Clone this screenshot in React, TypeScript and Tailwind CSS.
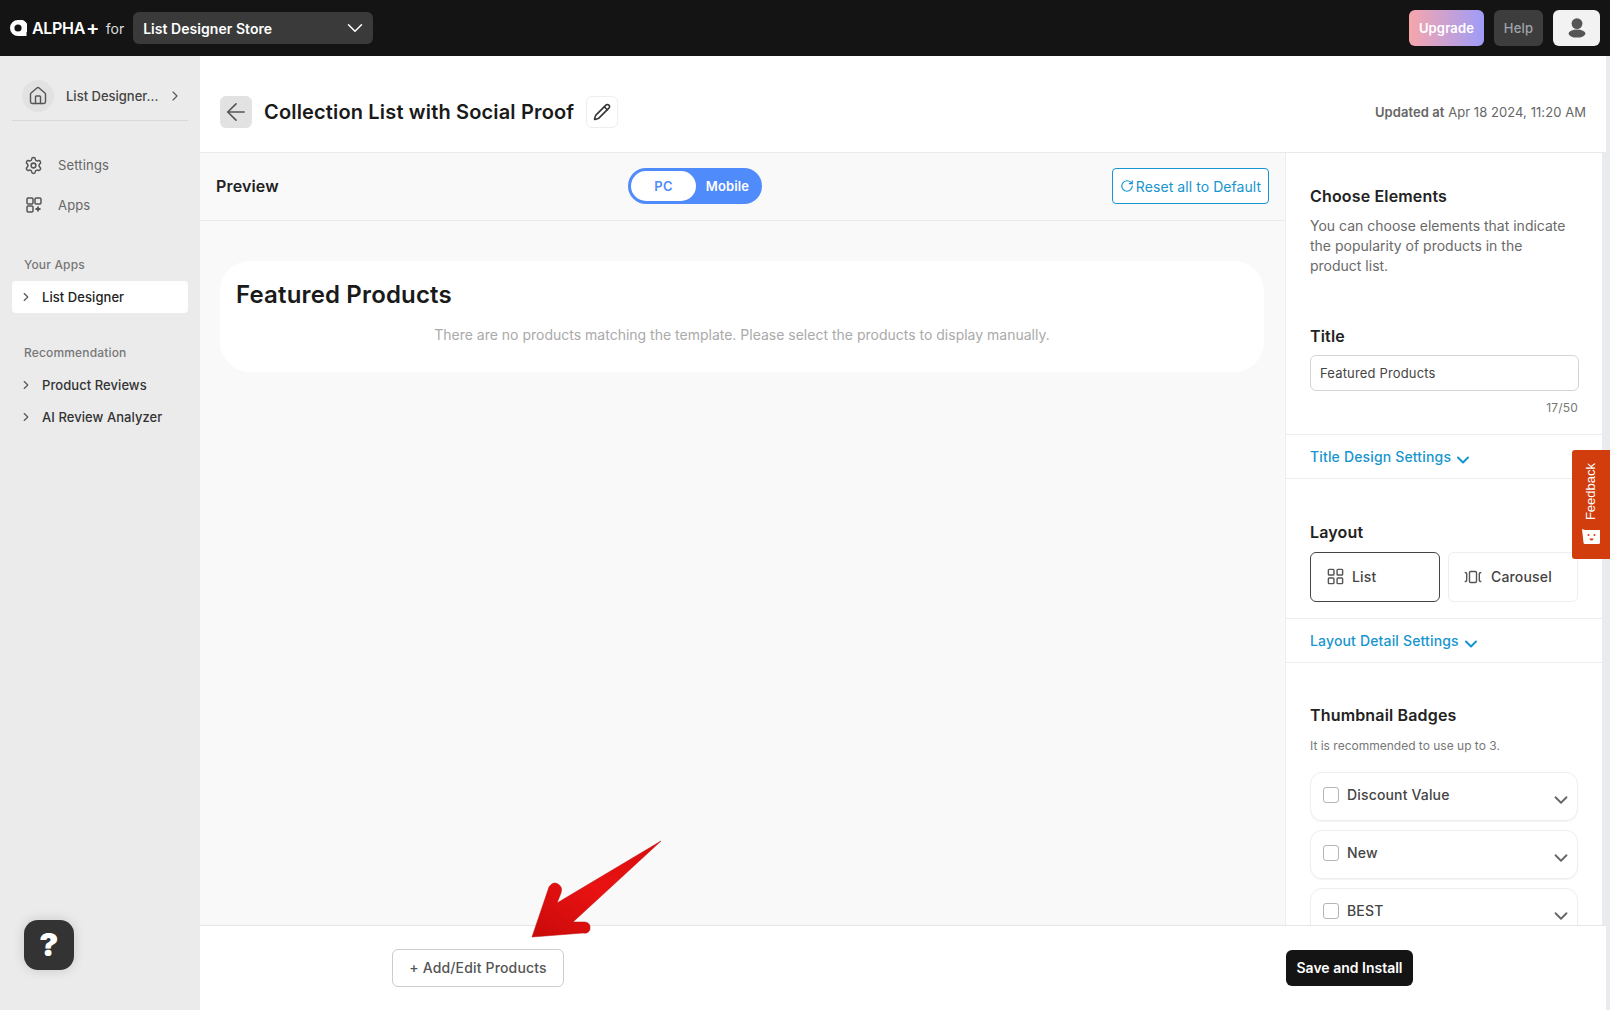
import { ArrowLeft, ChevronDown, ChevronRight, House, LayoutGrid, Pencil, RotateCw, Settings } from "lucide-react";

function AppsPlus() {
  return (
    <svg width="16" height="16" viewBox="0 0 16 16" fill="none" stroke="#555" strokeWidth="1.5">
      <rect x="1" y="1" width="6" height="6" rx="1.2" />
      <rect x="9" y="1" width="6" height="6" rx="1.2" />
      <rect x="1" y="9" width="6" height="6" rx="1.2" />
      <path d="M12 9.5v5M9.5 12h5" strokeWidth="1.8" />
    </svg>
  );
}

function CarouselIcon() {
  return (
    <svg width="18" height="14" viewBox="0 0 18 14" fill="none" stroke="#555" strokeWidth="1.4">
      <rect x="5.5" y="1.5" width="7" height="11" rx="1.2" />
      <path d="M0.7 2.5c1.4 0 2 .6 2 1.6v5.8c0 1-.6 1.6-2 1.6M17.3 2.5c-1.4 0-2 .6-2 1.6v5.8c0 1 .6 1.6 2 1.6" />
    </svg>
  );
}

function Logo() {
  return (
    <svg width="17" height="16" viewBox="0 0 17 16">
      <path d="M8 0a8 8 0 1 0 0 16h8.5v-3.5A8 8 0 0 0 8 0z" fill="#fff" />
      <circle cx="8" cy="8" r="3.6" fill="#141414" />
    </svg>
  );
}

function User() {
  return (
    <svg width="18" height="20" viewBox="0 0 18 20" fill="#555">
      <circle cx="9" cy="5.6" r="5.4" />
      <ellipse cx="9" cy="15.6" rx="8.4" ry="4" />
    </svg>
  );
}

function SideSub({ label, active }: { label: string; active?: boolean }) {
  return (
    <div className={`flex h-8 items-center rounded pl-[7px] ${active ? "bg-white text-[#222]" : "text-[#333]"}`}>
      <ChevronRight size={14} strokeWidth={2} className="shrink-0 text-[#555]" />
      <span className="ml-[9px] pt-[2px] text-[13px] font-medium tracking-[0.005em]">{label}</span>
    </div>
  );
}

function BadgeRow({ label }: { label: string }) {
  return (
    <div className="mb-[9px] flex h-[49px] items-start rounded-xl border border-[#eeeeee] pl-3 pr-[5px] pt-[14px] shadow-[0_1px_1px_rgba(0,0,0,0.05)]">
      <span className="h-4 w-4 rounded-[3px] border border-[#b5b5b5] bg-white" />
      <span className="ml-[8px] text-[14px] font-medium leading-4 text-[#444]">{label}</span>
      <ChevronDown size={22} strokeWidth={2} className="ml-auto mt-[2px] text-[#666]" />
    </div>
  );
}

function DetailLink({ label }: { label: string }) {
  return (
    <div className="flex h-[44px] items-center border-b border-[#eeeeee] pl-[24px]">
      <span className="text-[14px] font-medium text-[#1795ce]">{label}</span>
      <ChevronDown size={20} strokeWidth={2.5} className="ml-[2px] mt-[6px] text-[#1795ce]" />
    </div>
  );
}

export default function App() {
  return (
    <div className="relative flex h-[1010px] w-[1610px] flex-col overflow-hidden bg-white font-['Inter',sans-serif] tracking-[0.01em]">
      <header className="flex h-14 shrink-0 items-center bg-[#141414] pl-[10px] pr-[10px]">
        <Logo />
        <span className="ml-[5px] text-[16px] font-semibold tracking-[-0.3px] text-white">ALPHA</span>
        <span className="ml-[1px] text-[20px] font-semibold leading-none text-white">+</span>
        <span className="ml-[6px] text-[14px] tracking-normal text-[#ddd]">for</span>
        <div className="ml-[9px] flex h-8 w-[240px] items-center justify-between rounded-md bg-[#3a3a3a] pl-[10px] pr-[5px]">
          <span className="text-[14px] font-semibold tracking-[0.003em] text-white">List Designer Store</span>
          <ChevronDown size={26} strokeWidth={1.4} className="text-white" />
        </div>
        <div className="ml-auto flex items-center gap-[10px]">
          <div className="flex h-9 w-[75px] items-center justify-center rounded-md bg-[linear-gradient(90deg,#f7a6ab,#9e9cf9)] pt-[1px] text-[13px] font-semibold text-white">Upgrade</div>
          <div className="flex h-9 w-[49px] items-center justify-center rounded-md bg-[#3d3d3d] pt-[1px] text-[13px] font-medium text-[#a0a4ac]">Help</div>
          <div className="flex h-9 w-[47px] items-center justify-center rounded-md bg-[#f2f2f2]"><User /></div>
        </div>
      </header>

      <div className="flex min-h-0 flex-1">
        <aside className="relative flex w-[200px] shrink-0 flex-col bg-[#ebebeb] px-3 pt-6">
          <div className="flex h-[41px] items-start border-b border-[#d8d8d8] pl-[10px]">
            <div className="flex h-8 w-8 items-center justify-center rounded-full bg-[#e2e2e2]">
              <House size={20} strokeWidth={1.7} className="text-[#555]" />
            </div>
            <span className="ml-[12px] mt-[6px] text-[13px] font-medium leading-5 tracking-normal text-[#444]">List Designer...</span>
            <ChevronRight size={16} strokeWidth={1.7} className="ml-[9px] mt-[8px] text-[#555]" />
          </div>
          <div className="mt-[24px] flex h-10 items-center pl-[12px]">
            <Settings size={19} strokeWidth={1.9} className="text-[#555]" />
            <span className="ml-[15px] pt-[2px] text-[13px] text-[#666]">Settings</span>
          </div>
          <div className="flex h-10 items-center pl-[14px]">
            <AppsPlus />
            <span className="ml-[16px] pt-[2px] text-[13px] text-[#666]">Apps</span>
          </div>
          <div className="mt-[30px] pl-3 text-[12px] font-medium leading-5 text-[#777]">Your Apps</div>
          <div className="mt-[6px]"><SideSub label="List Designer" active /></div>
          <div className="mt-[30px] pl-3 text-[12px] font-medium leading-5 text-[#777]">Recommendation</div>
          <div className="mt-[6px]"><SideSub label="Product Reviews" /></div>
          <SideSub label="AI Review Analyzer" />
          <div className="absolute left-6 top-[864px] flex h-[50px] w-[50px] items-center justify-center rounded-[14px] bg-[#333333] text-[32px] font-black text-white shadow-[0_0_12px_rgba(0,0,0,0.15)]">?</div>
        </aside>

        <div className="flex min-w-0 flex-1 flex-col pr-[4px]">
          <div className="flex h-[97px] shrink-0 items-center border-b border-[#e9e9e9] pl-[20px] pr-[20px] pt-[16px]">
            <div className="flex h-8 w-8 items-center justify-center rounded-md bg-[#e2e2e2]">
              <ArrowLeft size={28} strokeWidth={1.4} className="text-[#555]" />
            </div>
            <h1 className="ml-[12px] text-[20px] font-semibold tracking-[0.008em] text-[#1a1a1a]">Collection List with Social Proof</h1>
            <div className="ml-[12px] flex h-8 w-8 items-center justify-center rounded-md border border-[#eeeeee]">
              <Pencil size={18} strokeWidth={2} className="text-[#333]" />
            </div>
            <div className="ml-auto pt-[2px] text-[13px] tracking-[0.005em] text-[#666]"><span className="font-semibold">Updated at</span> Apr 18 2024, 11:20 AM</div>
          </div>

          <div className="flex min-h-0 flex-1">
            <div className="flex w-[1085px] shrink-0 flex-col bg-[#f9f9fa]">
              <div className="flex h-[68px] shrink-0 items-center border-b border-[#ebebeb] pb-[1px] pl-4 pr-[16px]">
                <span className="w-[412px] text-[16px] font-semibold text-[#222]">Preview</span>
                <div className="flex h-9 w-[134px] items-center rounded-full bg-[#4f8bfb] p-[3px]">
                  <div className="flex h-[30px] w-[65px] items-center justify-center rounded-full bg-white pt-[1px] text-[13px] font-semibold text-[#4f8bfb]">PC</div>
                  <div className="ml-[3px] flex-1 pr-[3px] pt-[1px] text-center text-[13px] font-semibold text-white">Mobile</div>
                </div>
                <div className="ml-auto flex h-9 w-[157px] items-center justify-center gap-[2px] rounded border border-[#1795ce] bg-white text-[14px] tracking-[0.005em] text-[#1795ce]">
                  <RotateCw size={14} strokeWidth={2} />
                  Reset all to Default
                </div>
              </div>
              <div className="px-[20px] pt-[40px]">
                <div className="h-[111px] w-[1044px] rounded-[30px] bg-white px-4 pt-[18px]">
                  <h2 className="text-[24px] font-semibold leading-8 text-[#1a1a1a]">Featured Products</h2>
                  <p className="mt-[14px] text-center text-[14px] leading-5 tracking-normal text-[#aaaaaa]">There are no products matching the template. Please select the products to display manually.</p>
                </div>
              </div>
            </div>

            <div className="min-w-0 flex-1 overflow-hidden border-l border-[#eeeeee] bg-white">
              <div className="px-[24px] pt-[33px]">
                <h3 className="text-[16px] font-semibold leading-5 text-[#222]">Choose Elements</h3>
                <p className="mt-[10px] w-[265px] text-[14px] leading-5 tracking-normal text-[#6a6a6a]">You can choose elements that indicate the popularity of products in the product list.</p>
                <h3 className="mt-[50px] text-[16px] font-semibold leading-5 text-[#222]">Title</h3>
                <div className="mt-[9px] flex h-9 w-[269px] items-center rounded-md border border-[#d4d4d4] pl-[9px] pt-[2px] text-[13px] text-[#444]">Featured Products</div>
                <div className="mt-[9px] w-[268px] text-right text-[12px] leading-4 text-[#777]">17/50</div>
              </div>
              <div className="mt-[18px] border-t border-[#eeeeee]"><DetailLink label="Title Design Settings" /></div>
              <div className="px-[24px] pt-[43px]">
                <h3 className="text-[16px] font-semibold leading-5 text-[#222]">Layout</h3>
                <div className="mt-[10px] flex gap-[8px]">
                  <div className="flex h-[50px] w-[130px] items-center rounded-md border border-[#444] pb-[1px] pl-[15px] text-[14px] font-medium text-[#444]">
                    <LayoutGrid size={19} strokeWidth={1.8} className="text-[#555]" />
                    <span className="ml-[7px]">List</span>
                  </div>
                  <div className="flex h-[50px] w-[130px] items-center rounded-md border border-[#eeeeee] pb-[1px] pl-[15px] text-[14px] font-medium text-[#444]">
                    <CarouselIcon />
                    <span className="ml-[9px]">Carousel</span>
                  </div>
                </div>
              </div>
              <div className="mt-[16px] border-t border-[#eeeeee]"><DetailLink label="Layout Detail Settings" /></div>
              <div className="px-[24px] pt-[42px]">
                <h3 className="text-[16px] font-semibold leading-5 text-[#222]">Thumbnail Badges</h3>
                <p className="mt-[13px] text-[12px] leading-4 tracking-normal text-[#777]">It is recommended to use up to 3.</p>
                <div className="mt-[18px] w-[268px]">
                  <BadgeRow label="Discount Value" />
                  <BadgeRow label="New" />
                  <BadgeRow label="BEST" />
                </div>
              </div>
            </div>
          </div>

          <footer className="relative flex h-[85px] shrink-0 items-center border-t border-[#e6e6e6] bg-white pb-[1px]">
            <div className="ml-[192px] flex h-[38px] w-[172px] items-center justify-center rounded-md border border-[#cccccc] text-[14px] font-medium text-[#555]">+ Add/Edit Products</div>
            <div className="ml-[722px] flex h-9 w-[127px] items-center justify-center rounded-md bg-[#141414] text-[14px] font-semibold tracking-normal text-white">Save and Install</div>
          </footer>
        </div>
      </div>

      <div className="absolute bottom-[85px] right-[4px] top-[153px] w-[4px] bg-[#e9ebee]" />
      <div className="absolute bottom-0 right-0 top-14 w-[4px] bg-[#e9ebee]" />

      <div className="absolute right-0 top-[450px] flex h-[109px] w-[38px] flex-col items-center rounded-l-[3px] bg-[#d13d0c] pt-[13px]">
        <span className="rotate-180 font-['Liberation_Sans',sans-serif] text-[13px] leading-[14px] tracking-normal text-white [writing-mode:vertical-rl]">Feedback</span>
        <svg width="19" height="15" viewBox="0 0 19 15" className="mt-[9px]">
          <path d="M0 0l3 1h15v12.5a1.5 1.5 0 0 1-1.5 1.5H3a1.5 1.5 0 0 1-1.5-1.5z" fill="#fff" />
          <circle cx="6.5" cy="6" r="1" fill="#d13d0c" />
          <circle cx="12.5" cy="6" r="1" fill="#d13d0c" />
          <path d="M7.5 9.5a2 2 0 0 0 4 0z" fill="#d13d0c" />
        </svg>
      </div>

      <svg className="absolute left-[525px] top-[835px]" width="145" height="110" viewBox="0 0 145 110">
        <defs>
          <linearGradient id="arrowFill" x1="0" y1="1" x2="1" y2="0">
            <stop offset="0" stopColor="#c90a0a" />
            <stop offset="0.5" stopColor="#ea1212" />
            <stop offset="1" stopColor="#d90d0d" />
          </linearGradient>
        </defs>
        <path d="M7 102 L24 52 Q28 46 33 49 Q38 52 36 58 L32 68 L136 6 L48 87 L60 87 Q66 88 65 94 Q64 99 58 98 Z" fill="url(#arrowFill)" stroke="#b80a0a" strokeWidth="0.5" />
      </svg>
    </div>
  );
}
